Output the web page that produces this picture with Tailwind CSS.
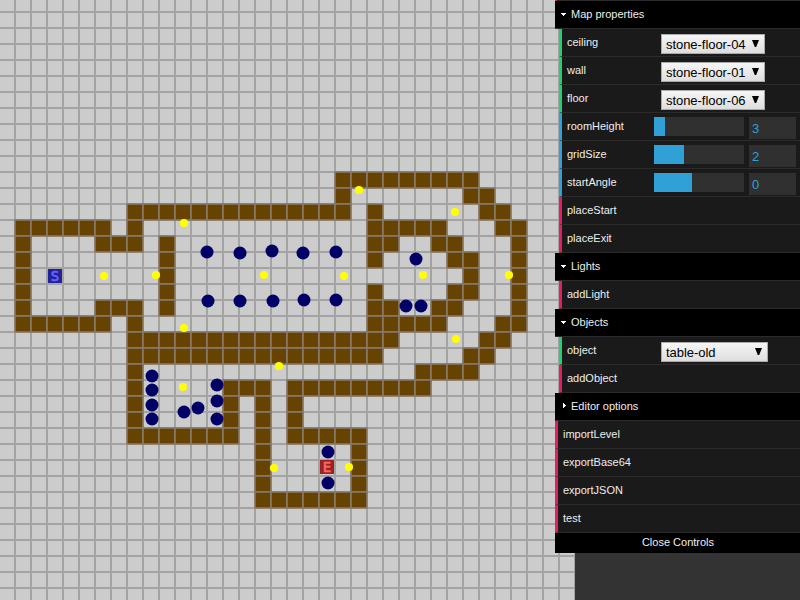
<!DOCTYPE html>
<html lang="en">
<head>
<meta charset="utf-8">
<title>Level editor</title>
<script src="https://cdn.jsdelivr.net/npm/@tailwindcss/browser@4"></script>
</head>
<body class="relative w-[800px] h-[600px] overflow-hidden bg-[#333] font-['Liberation_Sans',Arial,sans-serif]">
<svg id="map" class="block w-[575px] h-[600px] bg-[#ccc]" viewBox="0 0 575 600"></svg>

<aside class="absolute top-0 left-[555px] w-[245px] text-[11px] text-[#eee]">
  <ul id="panel"></ul>
  <div class="h-[20px] bg-black text-center leading-[19px] pl-px">Close Controls</div>
</aside>

<script>
const NS = 'http://www.w3.org/2000/svg';
const map = document.getElementById('map');
function add(tag, attrs, text) {
  const e = document.createElementNS(NS, tag);
  for (const k in attrs) e.setAttribute(k, attrs[k]);
  if (text) e.textContent = text;
  map.appendChild(e);
}
const CELL = 16, OX = 15, OY = 12;
for (let x = OX; x <= 575; x += CELL) add('rect', {x: x - 1, y: 0, width: 2, height: 600, fill: '#a3a3a3'});
for (let y = OY; y <= 600; y += CELL) add('rect', {x: 0, y: y - 1, width: 575, height: 2, fill: '#a3a3a3'});

// row: list of [first column, last column]
const walls = {
  10: [[20,28]],
  11: [[20,20],[28,29]],
  12: [[7,20],[22,22],[29,30]],
  13: [[0,5],[7,7],[22,26],[30,31]],
  14: [[0,0],[5,7],[9,9],[22,23],[26,27],[31,31]],
  15: [[0,0],[9,9],[22,22],[27,28],[31,31]],
  16: [[0,0],[9,9],[28,28],[31,31]],
  17: [[0,0],[9,9],[22,22],[27,28],[31,31]],
  18: [[0,0],[5,7],[9,9],[22,23],[26,27],[31,31]],
  19: [[0,5],[7,7],[22,26],[30,31]],
  20: [[7,23],[29,30]],
  21: [[7,22],[28,29]],
  22: [[7,7],[25,28]],
  23: [[7,7],[13,15],[17,25]],
  24: [[7,7],[13,13],[15,15],[17,17]],
  25: [[7,7],[13,13],[15,15],[17,17]],
  26: [[7,13],[15,15],[17,21]],
  27: [[15,15],[21,21]],
  28: [[15,15],[21,21]],
  29: [[15,15],[21,21]],
  30: [[15,21]]
};
for (const r in walls)
  for (const [a, b] of walls[r])
    for (let c = a; c <= b; c++)
      add('rect', {x: OX + c * CELL, y: OY + r * CELL, width: CELL, height: CELL, fill: '#664300', stroke: '#857b6a', 'stroke-width': 1.6});

add('rect', {x: 48, y: 269, width: 14, height: 14, fill: '#222299'});
add('text', {x: 55, y: 281, fill: '#6666ff', stroke: '#6666ff', 'stroke-width': 0.6, 'font-size': 14, 'text-anchor': 'middle', 'font-family': 'DejaVu Sans Mono, monospace'}, 'S');
add('rect', {x: 320, y: 460, width: 14, height: 14, fill: '#992222'});
add('text', {x: 327, y: 472, fill: '#ff6666', stroke: '#ff6666', 'stroke-width': 0.6, 'font-size': 14, 'text-anchor': 'middle', 'font-family': 'DejaVu Sans Mono, monospace'}, 'E');

const objects = [[207,252],[240,253],[272,251],[303,253],[336,252],[208,301],[240,301],[273,301],[304,300],[336,300],
  [416,259],[406,306],[421,306],[152,376],[152,390],[152,405],[152,419],[217,385],[217,401],[217,419],[184,412],[198,408],[328,452],[328,483]];
for (const [cx, cy] of objects) add('circle', {cx, cy, r: 6.5, fill: '#000066'});
const lights = [[104,276],[156,275],[184,223],[184,328],[264,275],[344,276],[359,190],[455,212],[423,275],[509,275],[456,339],
  [279,366],[183,387],[274,468],[349,467]];
for (const [cx, cy] of lights) add('circle', {cx, cy, r: 4.1, fill: '#ffff00'});

const tri = {
  open: '<svg class="w-[5px] h-[3px]" viewBox="0 0 5 3"><path fill="#fff" d="M0 0h5v1H4v1H3v1H2V2H1V1H0z"/></svg>',
  closed: '<svg class="w-[3px] h-[5px] ml-[2px] -mt-[2px]" viewBox="0 0 3 5"><path fill="#fff" d="M0 0h1v1h1v1h1v1H2v1H1v1H0z"/></svg>'
};
const folder = (name, state) => `<li class="h-[28px] flex items-center gap-[5px] pl-[6px] bg-black border-b border-[#2c2c2c]">${tri[state]}<span>${name}</span></li>`;
const row = (name, edge, indent, control = '') =>
  `<li class="h-[28px] flex ${indent} "><div class="flex-1 flex bg-[#1a1a1a] border-b border-[#2c2c2c] border-l-3 ${edge}"><span class="w-[92px] pl-[5px] leading-[27px]">${name}</span>${control}</div></li>`;
const G = 'border-l-[#1ed36f]', B = 'border-l-[#2fa1d6]', R = 'border-l-[#e61d5f]';
const IN = 'pl-[4px]', OUT = 'pl-0';
const select = (value, w) =>
  `<div class="${w} h-[20px] mt-[5px] ml-[7px] pl-[4px] pr-[5px] flex justify-between items-center border border-[#a9a9a9] bg-linear-to-b from-[#f6f6f6] to-[#dedede] text-black text-[13px]"><span class="relative top-px tracking-[-0.05px]">${value}</span><svg class="w-[7px] h-[7px] -mt-px" viewBox="0 0 7 7"><path d="M0 0h7L4.2 7H2.8z"/></svg></div>`;
const slider = (value, w) =>
  `<div class="w-[90px] h-[19px] mt-[4px] bg-[#303030]"><div class="h-full bg-[#2fa1d6]" style="width:${w}px"></div></div><div class="w-[47px] h-[22px] mt-[4px] ml-[5px] pl-[3px] bg-[#303030] text-[#2fa1d6] text-[13px] leading-[23px]">${value}</div>`;

document.getElementById('panel').innerHTML = [
  '<li class="h-px bg-[#2c2c2c] border-l-2 border-l-[#e61d5f]"></li>',
  folder('Map properties', 'open'),
  row('ceiling', G, IN, select('stone-floor-04', 'w-[104px]')),
  row('wall', G, IN, select('stone-floor-01', 'w-[104px]')),
  row('floor', G, IN, select('stone-floor-06', 'w-[104px]')),
  row('roomHeight', B, IN, slider(3, 11)),
  row('gridSize', B, IN, slider(2, 30)),
  row('startAngle', B, IN, slider(0, 38)),
  row('placeStart', R, IN),
  row('placeExit', R, IN),
  folder('Lights', 'open'),
  row('addLight', R, IN),
  folder('Objects', 'open'),
  row('object', G, IN, select('table-old', 'w-[107px]')),
  row('addObject', R, IN),
  folder('Editor options', 'closed'),
  row('importLevel', R, OUT),
  row('exportBase64', R, OUT),
  row('exportJSON', R, OUT),
  row('test', R, OUT)
].join('');
</script>
</body>
</html>
